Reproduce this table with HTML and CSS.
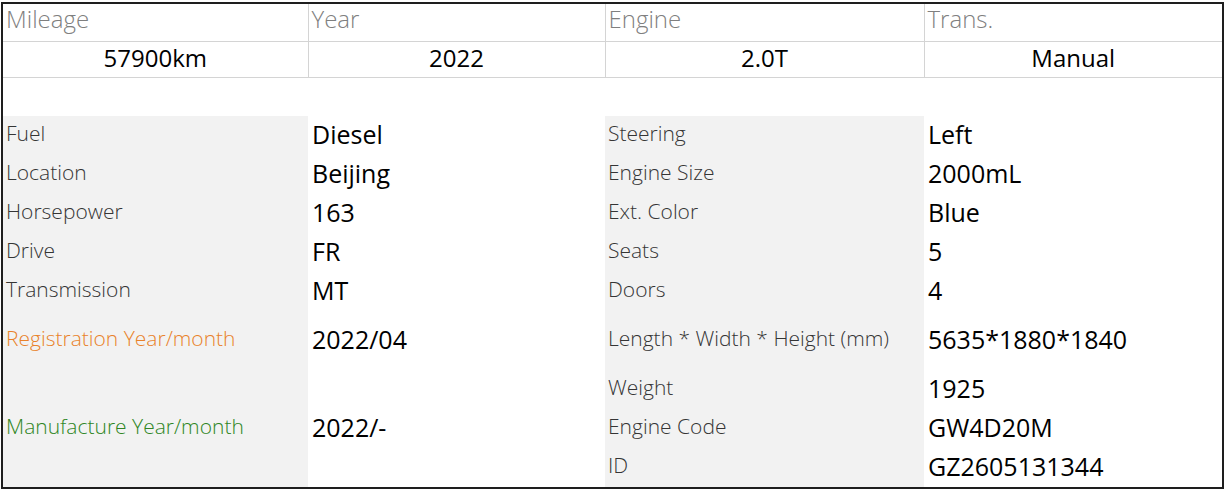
FILE: index.html
```html
<!DOCTYPE html>
<html lang="en">
<head>
    <meta charset="UTF-8">
    <meta name="viewport" content="width=device-width, initial-scale=1.0">
    <title>Vehicle Specs</title>
    <link rel="stylesheet" href="styles.css">
</head>
<body>
    <div class="sheet">
        <table class="summary">
            <colgroup>
                <col class="c1"><col class="c2"><col class="c3"><col class="c4">
            </colgroup>
            <tr class="head-row">
                <th>Mileage</th>
                <th>Year</th>
                <th>Engine</th>
                <th>Trans.</th>
            </tr>
            <tr class="value-row">
                <td>57900km</td>
                <td>2022</td>
                <td>2.0T</td>
                <td>Manual</td>
            </tr>
        </table>

        <div class="spacer"></div>

        <table class="details">
            <colgroup>
                <col class="c1"><col class="c2"><col class="c3"><col class="c4">
            </colgroup>
            <tr>
                <td class="label">Fuel</td><td class="value">Diesel</td>
                <td class="label">Steering</td><td class="value">Left</td>
            </tr>
            <tr>
                <td class="label">Location</td><td class="value">Beijing</td>
                <td class="label">Engine Size</td><td class="value">2000mL</td>
            </tr>
            <tr>
                <td class="label">Horsepower</td><td class="value">163</td>
                <td class="label">Ext. Color</td><td class="value">Blue</td>
            </tr>
            <tr>
                <td class="label">Drive</td><td class="value">FR</td>
                <td class="label">Seats</td><td class="value">5</td>
            </tr>
            <tr>
                <td class="label">Transmission</td><td class="value">MT</td>
                <td class="label">Doors</td><td class="value">4</td>
            </tr>
            <tr class="tall">
                <td class="label reg">Registration Year/month</td><td class="value">2022/04</td>
                <td class="label">Length * Width * Height (mm)</td><td class="value">5635*1880*1840</td>
            </tr>
            <tr>
                <td class="label mfg" rowspan="3">Manufacture Year/month</td><td class="value" rowspan="3">2022/-</td>
                <td class="label">Weight</td><td class="value">1925</td>
            </tr>
            <tr>
                <td class="label">Engine Code</td><td class="value">GW4D20M</td>
            </tr>
            <tr>
                <td class="label">ID</td><td class="value">GZ2605131344</td>
            </tr>
        </table>
    </div>
</body>
</html>
```

FILE: styles.css
```css
body {
    margin: 0;
    padding: 2px 0 0 1px;
    font-family: "Open Sans", "Noto Sans", sans-serif;
    line-height: 1.2;
    color: #000;
    background: #fff;
}
.sheet {
    width: 1219px;
    border: 2px solid #1e1e1e;
}
table {
    width: 100%;
    border-collapse: collapse;
    table-layout: fixed;
}
.c1 { width: 305px; }
.c2 { width: 297px; }
.c3 { width: 319px; }
.c4 { width: 298px; }

.summary th,
.summary td {
    border-right: 1px solid #d4d4d4;
    border-bottom: 1px solid #d4d4d4;
}
.summary th:last-child,
.summary td:last-child {
    border-right: none;
}
.head-row th {
    height: 31px;
    padding: 0 4px 6px 3px;
    text-align: left;
    font-weight: 300;
    font-size: 24px;
    color: #7f7f7f;
}
.value-row td {
    height: 33px;
    padding: 0 4px 2px;
    text-align: center;
    font-size: 24px;
}
.spacer {
    height: 38px;
}
.details td {
    height: 35px;
    padding: 0 4px 4px 3px;
    vertical-align: middle;
}
.details tr.tall td {
    height: 55px;
}
.label {
    background-color: #f2f2f2;
    font-weight: 300;
    font-size: 21px;
    color: #353535;
}
.value {
    font-size: 25px;
}
.details .value {
    padding-left: 4px;
}
.reg {
    color: #e9822a;
}
.mfg {
    color: #2f8624;
}
```
